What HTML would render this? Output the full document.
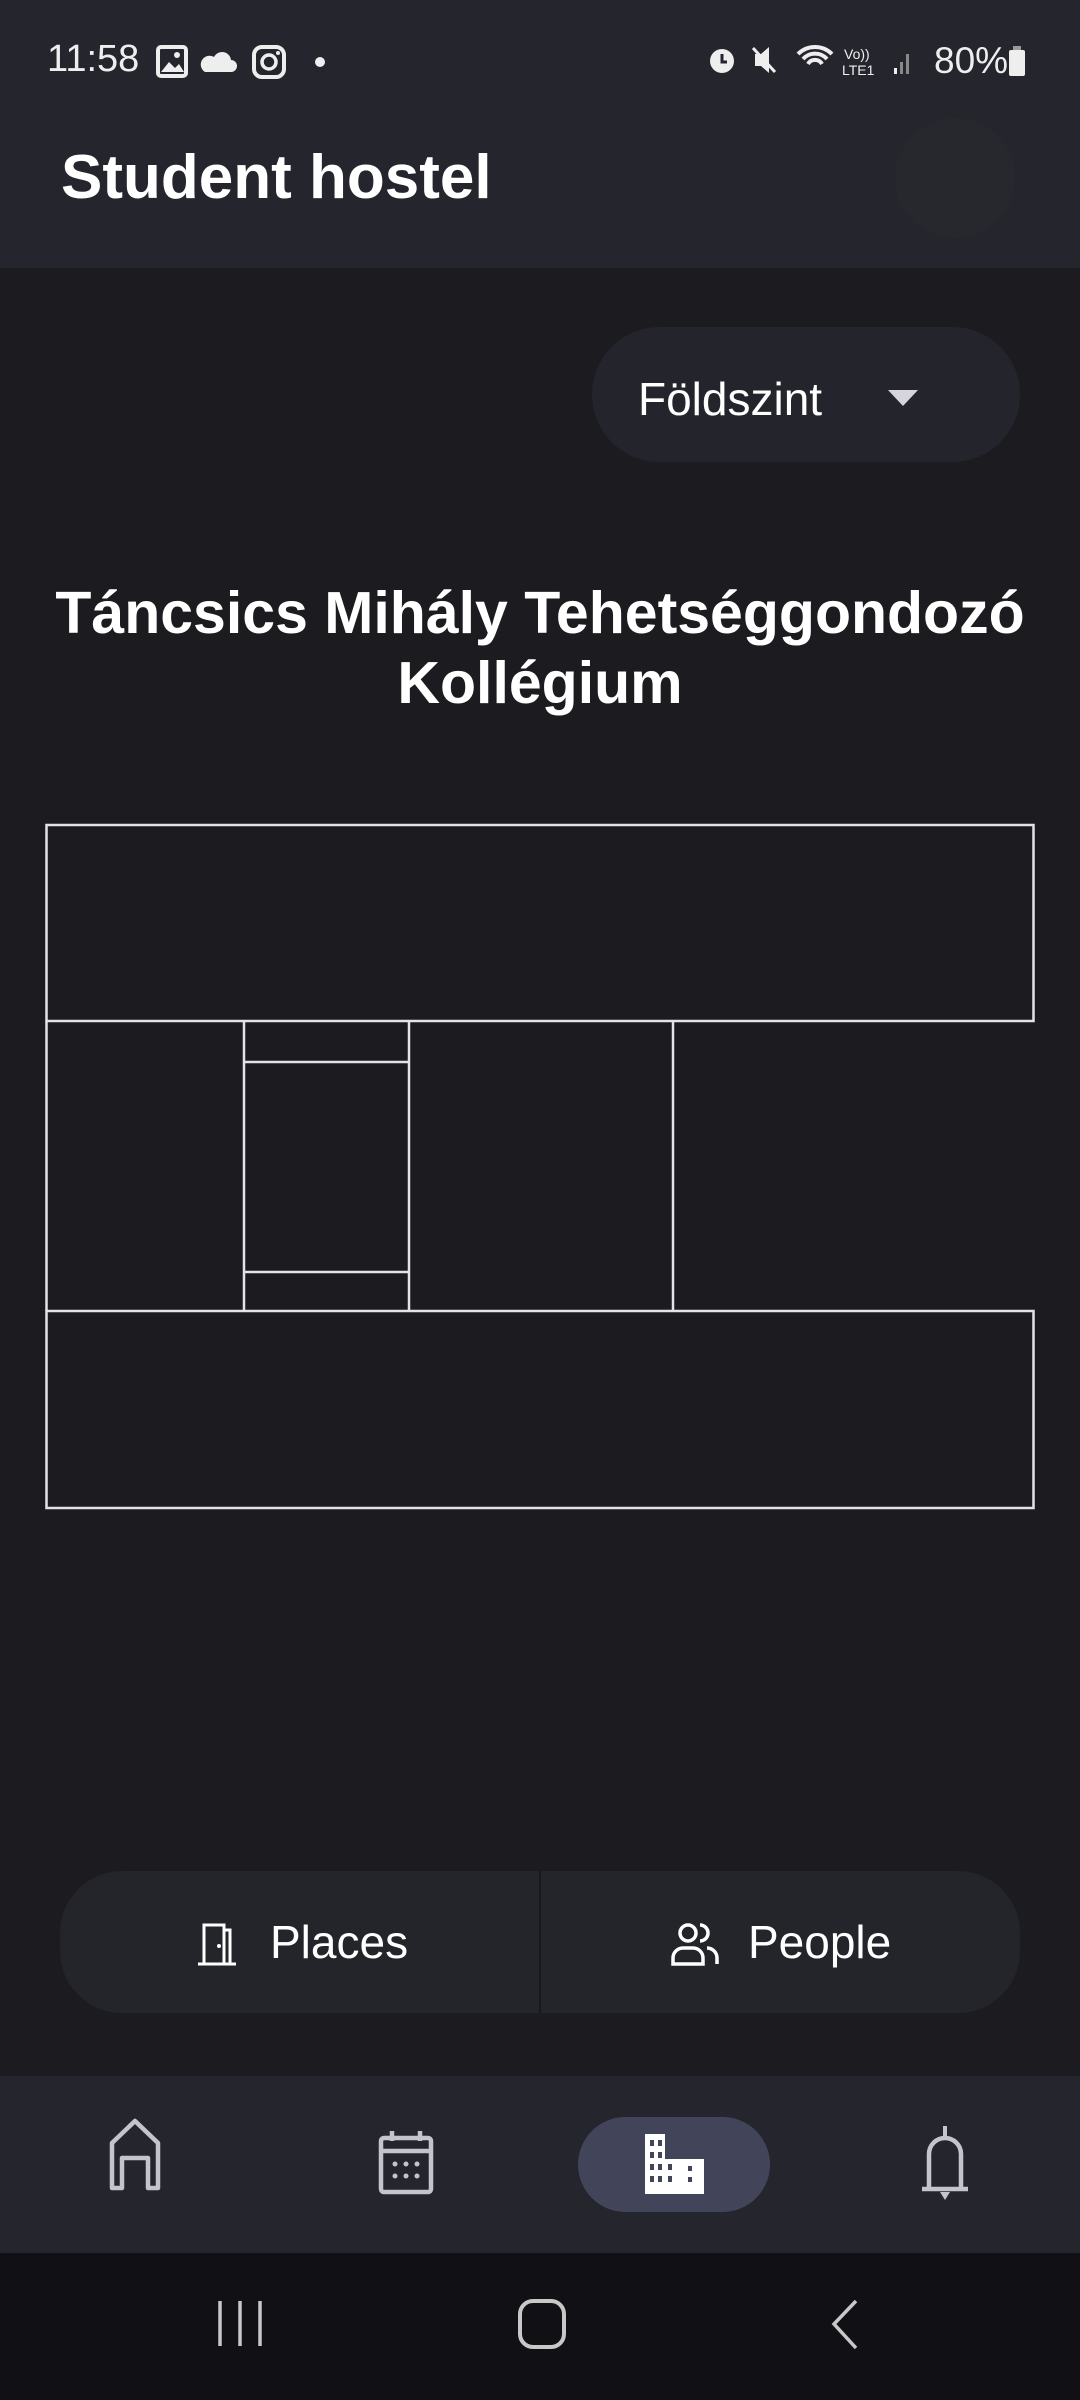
<!DOCTYPE html>
<html><head><meta charset="utf-8"><style>
body{margin:0;width:1080px;height:2400px;background:#1c1c20;font-family:"Liberation Sans",sans-serif;color:#fff;position:relative;overflow:hidden}
.abs{position:absolute}
</style></head><body>
<div class="abs" style="left:0;top:0;width:1080px;height:268px;background:#25262d"></div>
<div class="abs" style="left:47px;top:38px;font-size:38px;color:#eee">11:58</div>
<svg class="abs" style="left:155px;top:44px" width="180" height="36" viewBox="0 0 180 36">
<rect x="3" y="3" width="28" height="29" rx="3" fill="none" stroke="#eee" stroke-width="4"/><path d="M6 28 L14 18 L20 24 L24 20 L29 28Z" fill="#eee"/><circle cx="22" cy="11" r="3" fill="#eee"/>
<path d="M50 28 h26 a6 6 0 0 0 0-12 a9 9 0 0 0-17-3 a7 7 0 0 0-9 15z" fill="#eee"/>
<rect x="99" y="3" width="30" height="30" rx="8" fill="none" stroke="#eee" stroke-width="4"/><circle cx="114" cy="18" r="7" fill="none" stroke="#eee" stroke-width="3.5"/><circle cx="123" cy="9" r="2" fill="#eee"/>
<circle cx="165" cy="18" r="5" fill="#eee"/></svg>
<svg class="abs" style="left:700px;top:40px" width="340" height="40" viewBox="0 0 340 40">
<circle cx="22" cy="21" r="12" fill="#eee"/><path d="M22 14v8h5" stroke="#25262d" stroke-width="3" fill="none"/>
<path d="M55 14h6l8-7v26l-8-7h-6z" fill="#eee"/><path d="M53 8l22 24" stroke="#eee" stroke-width="3"/>
<path d="M98 14a24 24 0 0 1 34 0M103 19a16 16 0 0 1 24 0M108 24a8 8 0 0 1 14 0" stroke="#eee" stroke-width="4" fill="none"/>
<text x="144" y="19" font-size="14" fill="#eee" font-family="Liberation Sans">Vo))</text><text x="142" y="35" font-size="14" fill="#eee" font-family="Liberation Sans">LTE1</text>
<rect x="194" y="28" width="3" height="6" fill="#eee"/><rect x="200" y="22" width="3" height="12" fill="#888"/><rect x="206" y="14" width="3" height="20" fill="#888"/>
<text x="234" y="33" font-size="37" fill="#eee" font-family="Liberation Sans">80%</text>
<rect x="313" y="6" width="8" height="4" fill="#999"/><rect x="309" y="10" width="16" height="26" rx="2" fill="#eee"/></svg>
<div class="abs" style="left:61px;top:142px;font-size:62px;font-weight:bold;color:#fff">Student hostel</div>
<div class="abs" style="left:895px;top:118px;width:120px;height:120px;border-radius:60px;background:#28292f;opacity:.6"></div>

<div class="abs" style="left:592px;top:327px;width:428px;height:135px;border-radius:68px;background:#24252c"></div>
<div class="abs" style="left:638px;top:372px;font-size:46px;color:#fff">Földszint</div>
<svg class="abs" style="left:886px;top:388px" width="34" height="20"><path d="M2 2h30L17 18z" fill="#d6d4dc"/></svg>

<div class="abs" style="left:0;top:578px;width:1080px;text-align:center;font-size:59px;font-weight:bold;line-height:70px">Táncsics Mihály Tehetséggondozó<br>Kollégium</div>

<svg class="abs" style="left:0;top:0" width="1080" height="1600">
<g stroke="#e4e4e8" stroke-width="2.5" fill="none">
<rect x="46.5" y="825" width="987" height="196"/>
<rect x="46.5" y="1311" width="987" height="197"/>
<path d="M46.5 1021V1311M244 1021V1311M409 1021V1311M673 1021V1311M244 1062H409M244 1272H409"/>
</g></svg>

<div class="abs" style="left:60px;top:1871px;width:960px;height:142px;border-radius:62px;background:#23252b"></div>
<div class="abs" style="left:539px;top:1871px;width:2px;height:142px;background:#1a1a1e"></div>
<svg class="abs" style="left:196px;top:1922px" width="42" height="44" viewBox="0 0 42 44"><path d="M2 42h38M8 42V3h20v39M28 8h6v34" stroke="#fff" stroke-width="3" fill="none"/><circle cx="23" cy="24" r="2" fill="#fff"/></svg>
<div class="abs" style="left:270px;top:1915px;font-size:46px">Places</div>
<svg class="abs" style="left:670px;top:1922px" width="52" height="44" viewBox="0 0 52 44"><circle cx="18" cy="11" r="8" stroke="#fff" stroke-width="3.5" fill="none"/><path d="M3 42v-6a10 10 0 0 1 10-10h10a10 10 0 0 1 10 10v6zM30 3a8 8 0 0 1 0 16M37 26a10 10 0 0 1 10 10v6" stroke="#fff" stroke-width="3.5" fill="none"/></svg>
<div class="abs" style="left:748px;top:1915px;font-size:46px">People</div>

<div class="abs" style="left:0;top:2076px;width:1080px;height:177px;background:#25262d"></div>
<div class="abs" style="left:578px;top:2117px;width:192px;height:95px;border-radius:48px;background:#42445a"></div>
<svg class="abs" style="left:0;top:2076px" width="1080" height="177" viewBox="0 0 1080 177">
<path d="M112 112V67l23-22 23 22v45h-10V82h-26v30z" stroke="#c4c4cc" stroke-width="4.5" fill="none" stroke-linejoin="round"/>
<rect x="381" y="62" width="50" height="54" rx="3" stroke="#c4c4cc" stroke-width="4.5" fill="none"/><path d="M381 75h50M392 55v10M420 55v10" stroke="#c4c4cc" stroke-width="4.5"/>
<g fill="#c4c4cc"><circle cx="395" cy="88" r="2.5"/><circle cx="406" cy="88" r="2.5"/><circle cx="417" cy="88" r="2.5"/><circle cx="395" cy="100" r="2.5"/><circle cx="406" cy="100" r="2.5"/><circle cx="417" cy="100" r="2.5"/></g>
<path d="M645 58h20v25h39v35h-59z" fill="#fff"/>
<g fill="#42445a"><rect x="650" y="64" width="4" height="6"/><rect x="658" y="64" width="4" height="6"/><rect x="650" y="76" width="4" height="6"/><rect x="658" y="76" width="4" height="6"/><rect x="650" y="88" width="4" height="6"/><rect x="658" y="88" width="4" height="6"/><rect x="668" y="88" width="4" height="6"/><rect x="650" y="100" width="4" height="6"/><rect x="658" y="100" width="4" height="6"/><rect x="668" y="100" width="4" height="6"/><rect x="688" y="90" width="4" height="5"/><rect x="688" y="101" width="4" height="5"/></g>
<path d="M922 113h46M929 113V78a16 16 0 0 1 32 0v35" stroke="#c4c4cc" stroke-width="4.5" fill="none"/><path d="M945 50v10" stroke="#c4c4cc" stroke-width="4"/><path d="M940 116h10l-5 8z" fill="#c4c4cc"/>
</svg>

<div class="abs" style="left:0;top:2253px;width:1080px;height:147px;background:#111115"></div>
<svg class="abs" style="left:0;top:2253px" width="1080" height="147">
<path d="M220 48v45M240 48v45M260 48v45" stroke="#c8c8c8" stroke-width="3.5"/>
<rect x="520" y="48" width="44" height="46" rx="13" stroke="#c8c8c8" stroke-width="4" fill="none"/>
<path d="M856 48L834 71l22 24" stroke="#c8c8c8" stroke-width="3.5" fill="none"/>
</svg>
</body></html>
